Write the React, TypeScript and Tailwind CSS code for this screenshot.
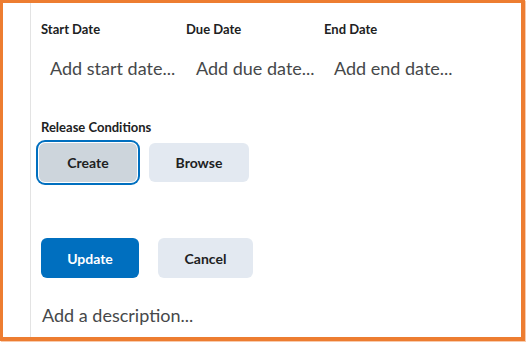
export default function App() {
  return (
    <div className="w-[526px] h-[342px] bg-white font-['Lato',sans-serif]">
      <div className="w-[525px] h-[341px] border-t-[3px] border-l-[3px] border-r-[4px] border-b-[4px] border-[#ed7d31] flex shadow-[1px_1px_1px_rgba(237,125,49,0.4)]">
        <div className="w-[27px] shrink-0" />
        <div className="flex-1 border-l border-[#e3e3e3] pl-[10px] pt-[18px]">
          <div className="flex">
            <div className="w-[145px]">
              <div className="text-[13px] leading-[16px] font-bold text-[#202122]">Start Date</div>
              <div className="mt-[21px] pl-[9px] text-[18px] leading-[20px] text-[#46484a]">Add start date...</div>
            </div>
            <div className="w-[138px]">
              <div className="text-[13px] leading-[16px] font-bold text-[#202122]">Due Date</div>
              <div className="mt-[21px] pl-[10px] text-[18px] leading-[20px] text-[#46484a]">Add due date...</div>
            </div>
            <div>
              <div className="text-[13px] leading-[16px] font-bold text-[#202122]">End Date</div>
              <div className="mt-[21px] pl-[10px] text-[18px] leading-[20px] text-[#46484a]">Add end date...</div>
            </div>
          </div>

          <div className="mt-[41px] text-[13px] leading-[16px] font-bold text-[#202122]">Release Conditions</div>
          <div className="mt-[8px] flex gap-[12px]">
            <button className="-ml-[2px] w-[98px] h-[39px] rounded-[6px] bg-[#cdd5dc] text-[14px] font-bold text-[#202122] shadow-[0_0_0_1px_#fff,0_0_0_3px_#006fbf]">
              Create
            </button>
            <button className="w-[100px] h-[39px] rounded-[6px] bg-[#e3e9f1] text-[14px] font-bold text-[#202122]">
              Browse
            </button>
          </div>

          <div className="mt-[56px] flex gap-[19px]">
            <button className="w-[98px] h-[40px] rounded-[6px] bg-[#006fbf] text-[14px] font-bold text-white">
              Update
            </button>
            <button className="w-[95px] h-[40px] rounded-[6px] bg-[#e3e9f1] text-[14px] font-bold text-[#202122]">
              Cancel
            </button>
          </div>

          <div className="mt-[27px] pl-px text-[18px] leading-[20px] text-[#46484a]">Add a description...</div>
        </div>
      </div>
    </div>
  );
}
